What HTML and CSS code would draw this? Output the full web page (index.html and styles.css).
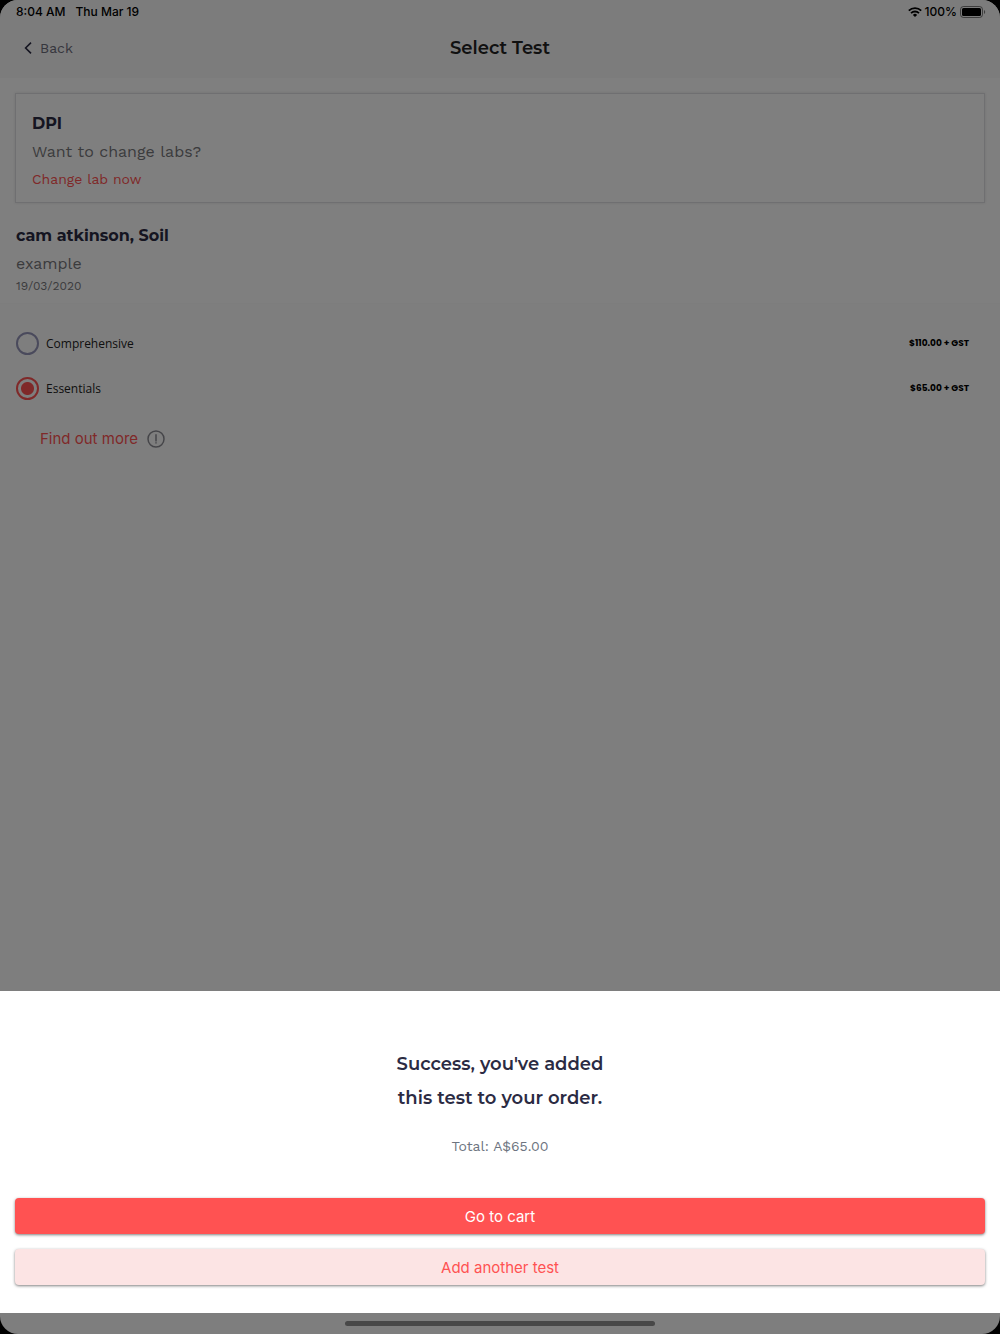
FILE: index.html
```html
<!DOCTYPE html>
<html lang="en">
<head>
    <meta charset="UTF-8">
    <meta name="viewport" content="width=device-width, initial-scale=1.0">
    <title>Select Test</title>
    <link rel="stylesheet" href="styles.css">
</head>
<body>
    <div class="screen">
        <div class="status-bar">
            <span>8:04 AM</span>
            <span>Thu Mar 19</span>
            <div class="status-right">
                <svg class="wifi" viewBox="0 0 14 10" width="14" height="10" fill="none" stroke="#000" stroke-width="1.8">
                    <path d="M0.8 3.7a9 9 0 0 1 12.4 0"/>
                    <path d="M3 6.1a5.8 5.8 0 0 1 8 0"/>
                    <path d="M7 10L4.9 7.9a3 3 0 0 1 4.2 0z" fill="#000" stroke="none"/>
                </svg>
                <span>100%</span>
                <svg class="battery" viewBox="0 0 26 12" width="26" height="12">
                    <rect x="0.5" y="0.5" width="22" height="11" rx="3" fill="none" stroke="#000" stroke-opacity="0.5"/>
                    <rect x="2" y="2" width="19" height="8" rx="1.5"/>
                    <path d="M24 4v4c1.6-.6 1.6-3.4 0-4z" fill-opacity="0.5"/>
                </svg>
            </div>
        </div>

        <header class="header">
            <a href="#" class="back">
                <svg viewBox="0 0 8 12" width="8" height="12" fill="none" stroke="#2b2b43" stroke-width="1.6">
                    <path d="M7 0.6L1.6 6 7 11.4"/>
                </svg>
                Back
            </a>
            <h1>Select Test</h1>
        </header>

        <section class="details">
            <div class="lab-card">
                <h2>DPI</h2>
                <p class="subtitle">Want to change labs?</p>
                <a href="#" class="change-lab">Change lab now</a>
            </div>
            <div class="sample">
                <h2>cam atkinson, Soil</h2>
                <p class="subtitle">example</p>
                <p class="date">19/03/2020</p>
            </div>
        </section>

        <form class="tests">
            <div class="test-row">
                <input type="radio" id="comprehensive" name="test">
                <label for="comprehensive">Comprehensive</label>
                <span class="price">$110.00 + GST</span>
            </div>
            <div class="test-row">
                <input type="radio" id="essentials" name="test" checked>
                <label for="essentials">Essentials</label>
                <span class="price">$65.00 + GST</span>
            </div>
            <a href="#" class="find-more">
                Find out more
                <svg viewBox="0 0 18 18" width="18" height="18" fill="none" stroke="#8b8b92" stroke-width="1.5">
                    <circle cx="9" cy="9" r="8"/>
                    <path d="M9 4.2v7.4M9 12.2v1.4"/>
                </svg>
            </a>
        </form>
    </div>

    <!-- Success sheet -->
    <div class="overlay">
        <div class="sheet" role="dialog" aria-labelledby="sheetTitle">
            <h2 id="sheetTitle">Success, you've added<br>this test to your order.</h2>
            <p class="total">Total: A$65.00</p>
            <button type="button" class="btn btn-primary">Go to cart</button>
            <button type="button" class="btn btn-secondary">Add another test</button>
        </div>
        <div class="home-area">
            <div class="home-bar"></div>
        </div>
    </div>
</body>
</html>
```
FILE: styles.css
```css
* {
    box-sizing: border-box;
}

body {
    margin: 0;
    background-color: #000;
    font-family: "Work Sans", "Noto Sans", sans-serif;
    color: #2b2b43;
}

h1, h2, p {
    margin: 0;
}

h1, h2 {
    font-family: Montserrat, Inter, sans-serif;
    font-weight: 600;
}

a {
    text-decoration: none;
}

.screen {
    min-height: 100vh;
    background-color: #fdfdfd;
    border-radius: 18px;
    overflow: hidden;
}

/* Status bar and header */
.status-bar {
    display: flex;
    align-items: center;
    gap: 10px;
    height: 24px;
    padding: 0 14px 1px 16px;
    background-color: #f8f8f8;
    color: #000;
    font-family: Inter, sans-serif;
    font-size: 12px;
    font-weight: 500;
}

.status-right {
    display: flex;
    align-items: center;
    gap: 3px;
    margin-left: auto;
}

.header {
    display: grid;
    grid-template-columns: 1fr auto 1fr;
    align-items: center;
    height: 54px;
    padding: 0 24px 6px;
    background-color: #f8f8f8;
}

.header h1 {
    font-size: 18px;
    line-height: 24px;
    color: #222;
}

.back {
    display: flex;
    align-items: center;
    gap: 8px;
    color: #6c6c7b;
    font-size: 14px;
}

/* Lab and sample */
.details {
    padding: 15px 15px 9px;
    background-color: #fff;
    border-bottom: 1px solid #fafafa;
}

.details h2 {
    font-size: 16px;
    font-weight: 700;
    line-height: 28px;
}

.lab-card {
    padding: 16px 16px 9px;
    border: 1px solid #dedee2;
    box-shadow: 0 0 3px rgba(0, 0, 0, 0.12);
}

.subtitle {
    color: #77777b;
    font-size: 16px;
    line-height: 28px;
}

.change-lab {
    display: block;
    color: #ff5252;
    font-size: 14px;
    line-height: 27px;
}

.sample {
    padding: 19px 1px 0;
}

.date {
    color: #77777b;
    font-size: 12px;
    line-height: 16px;
}

/* Tests */
.tests {
    padding: 17px 16px;
}

.test-row {
    display: flex;
    align-items: center;
    gap: 7px;
    height: 45px;
    padding-right: 15px;
}

.test-row input {
    appearance: none;
    width: 23px;
    height: 23px;
    margin: 0;
    border: 2px solid #9494b8;
    border-radius: 50%;
}

.test-row input:checked {
    padding: 3px;
    border-color: #ff5252;
    background: radial-gradient(circle, #ff5252 6px, transparent 7px);
}

.test-row label {
    flex: 1;
    color: #222;
    font-family: "Open Sans", sans-serif;
    font-size: 12px;
}

.price {
    color: #000;
    font-family: Poppins, Inter, sans-serif;
    font-size: 9px;
    font-weight: 700;
}

.find-more {
    display: flex;
    align-items: center;
    gap: 9px;
    padding: 18px 24px;
    color: #ff5252;
    font-family: Inter, sans-serif;
    font-size: 15px;
    line-height: 20px;
}

/* Bottom sheet */
.overlay {
    position: fixed;
    inset: 0;
    display: flex;
    flex-direction: column;
    justify-content: flex-end;
    background-color: rgba(0, 0, 0, 0.5);
}

.sheet {
    display: flex;
    flex-direction: column;
    padding: 56px 15px 28px;
    background-color: #fff;
    text-align: center;
}

.sheet h2 {
    font-size: 18px;
    line-height: 34px;
}

.total {
    margin: 19px 0 40px;
    color: #6d7480;
    font-size: 14px;
    line-height: 24px;
}

.btn {
    height: 36px;
    border: none;
    border-radius: 4px;
    box-shadow: 0 1px 3px rgba(0, 0, 0, 0.5);
    font-family: Inter, sans-serif;
    font-size: 15px;
    cursor: pointer;
}

.btn-primary {
    margin-bottom: 15px;
    background-color: #ff5252;
    color: #fff;
}

.btn-secondary {
    background-color: #fce4e4;
    color: #ff5252;
}

.home-area {
    display: flex;
    justify-content: center;
    align-items: center;
    height: 21px;
}

.home-bar {
    width: 31%;
    height: 5px;
    border-radius: 3px;
    background-color: #484848;
}
```
